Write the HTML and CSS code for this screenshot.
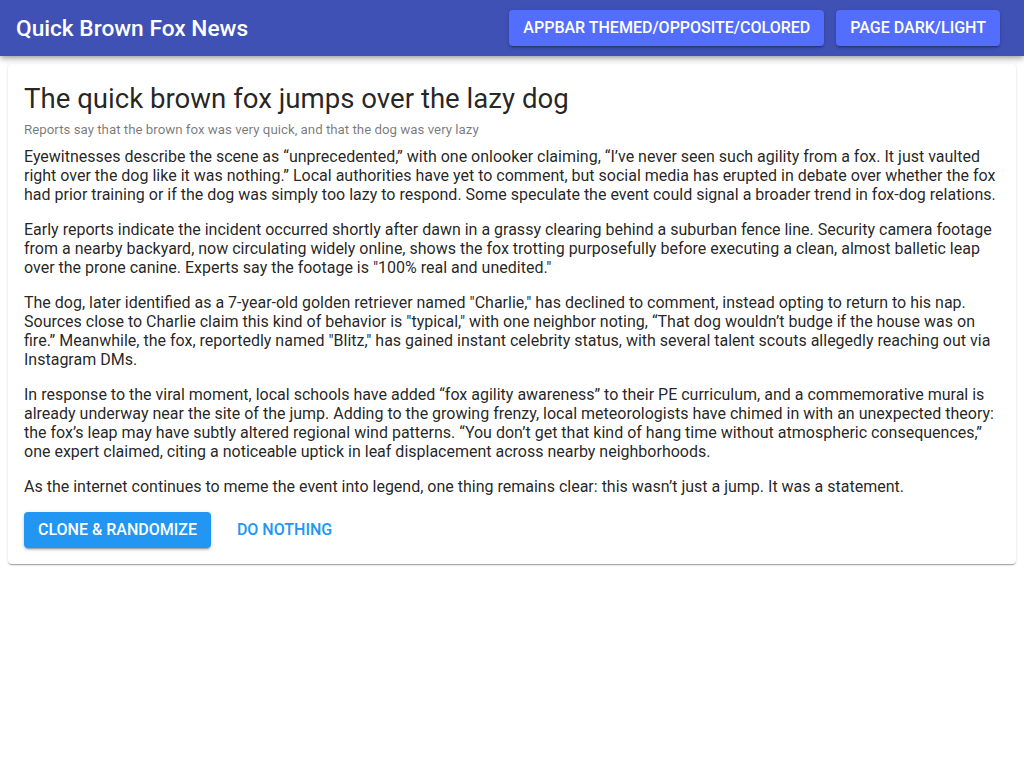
FILE: index.html
```html
<!DOCTYPE html>
<html>
<head>
<meta charset="utf-8">
<link rel="stylesheet" href="styles.css">
</head>
<body>
<header class="appbar">
  <div class="brand">Quick Brown Fox News</div>
  <div class="actions">
    <button class="btn btn-accent">Appbar Themed/Opposite/Colored</button>
    <button class="btn btn-accent">Page Dark/Light</button>
  </div>
</header>
<main class="page">
  <article class="card">
    <h1 class="title">The quick brown fox jumps over the lazy dog</h1>
    <p class="subtitle">Reports say that the brown fox was very quick, and that the dog was very lazy</p>
    <p class="para">Eyewitnesses describe the scene as “unprecedented,” with one onlooker claiming, “I’ve never seen such agility from a fox. It just vaulted right over the dog like it was nothing.” Local authorities have yet to comment, but social media has erupted in debate over whether the fox had prior training or if the dog was simply too lazy to respond. Some speculate the event could signal a broader trend in fox-dog relations.</p>
    <p class="para">Early reports indicate the incident occurred shortly after dawn in a grassy clearing behind a suburban fence line. Security camera footage from a nearby backyard, now circulating widely online, shows the fox trotting purposefully before executing a clean, almost balletic leap over the prone canine. Experts say the footage is "100% real and unedited."</p>
    <p class="para">The dog, later identified as a 7-year-old golden retriever named "Charlie," has declined to comment, instead opting to return to his nap. Sources close to Charlie claim this kind of behavior is "typical," with one neighbor noting, “That dog wouldn’t budge if the house was on fire.” Meanwhile, the fox, reportedly named "Blitz," has gained instant celebrity status, with several talent scouts allegedly reaching out via Instagram DMs.</p>
    <p class="para">In response to the viral moment, local schools have added “fox agility awareness” to their PE curriculum, and a commemorative mural is already underway near the site of the jump. Adding to the growing frenzy, local meteorologists have chimed in with an unexpected theory: the fox’s leap may have subtly altered regional wind patterns. “You don’t get that kind of hang time without atmospheric consequences,” one expert claimed, citing a noticeable uptick in leaf displacement across nearby neighborhoods.</p>
    <p class="para">As the internet continues to meme the event into legend, one thing remains clear: this wasn’t just a jump. It was a statement.</p>
    <div class="card-actions">
      <button class="btn btn-primary">Clone &amp; Randomize</button>
      <button class="btn btn-text">Do Nothing</button>
    </div>
  </article>
</main>
</body>
</html>
```

FILE: styles.css
```css
* { box-sizing: border-box; }
html, body {
  margin: 0;
  padding: 0;
  background: #ffffff;
  font-family: Roboto, "Liberation Sans", sans-serif;
  color: rgba(0, 0, 0, 0.87);
}
.appbar {
  height: 56px;
  background: #3f51b5;
  color: #fff;
  display: flex;
  align-items: center;
  justify-content: space-between;
  padding: 0 24px 0 16px;
  box-shadow: 0 2px 4px -1px rgba(0,0,0,0.2), 0 4px 5px 0 rgba(0,0,0,0.14), 0 1px 10px 0 rgba(0,0,0,0.12);
  position: relative;
  z-index: 1;
}
.brand {
  font-size: 22.7px;
  font-weight: 500;
}
.actions {
  display: flex;
  gap: 12px;
}
.btn {
  font-family: Roboto, "Liberation Sans", sans-serif;
  font-size: 16px;
  font-weight: 500;
  text-transform: uppercase;
  letter-spacing: 0;
  height: 36px;
  padding: 0 14px;
  border: 0;
  border-radius: 4px;
  cursor: pointer;
  line-height: 36px;
}
.btn-accent {
  background: #536dfe;
  color: #fff;
  box-shadow: 0 3px 1px -2px rgba(0,0,0,0.2), 0 2px 2px 0 rgba(0,0,0,0.14), 0 1px 5px 0 rgba(0,0,0,0.12);
}
.btn-primary {
  background: #2196f3;
  color: #fff;
  box-shadow: 0 3px 1px -2px rgba(0,0,0,0.2), 0 2px 2px 0 rgba(0,0,0,0.14), 0 1px 5px 0 rgba(0,0,0,0.12);
}
.btn-text {
  background: transparent;
  color: #2196f3;
  padding: 0 10px;
}
.page {
  padding: 8px;
}
.card {
  background: #fff;
  border-radius: 4px;
  padding: 16px;
  box-shadow: 0 2px 1px -1px rgba(0,0,0,0.2), 0 1px 1px 0 rgba(0,0,0,0.14), 0 1px 3px 0 rgba(0,0,0,0.12);
}
.title {
  margin: 0 0 2px;
  font-size: 27.6px;
  font-weight: 400;
  line-height: 38px;
  color: rgba(0,0,0,0.87);
}
.subtitle {
  margin: 0 0 7px;
  font-size: 13.3px;
  line-height: 20px;
  color: rgba(0,0,0,0.54);
}
.para {
  margin: 0 0 16px;
  font-size: 16px;
  line-height: 19px;
}
.card-actions {
  display: flex;
  gap: 16px;
}
```
